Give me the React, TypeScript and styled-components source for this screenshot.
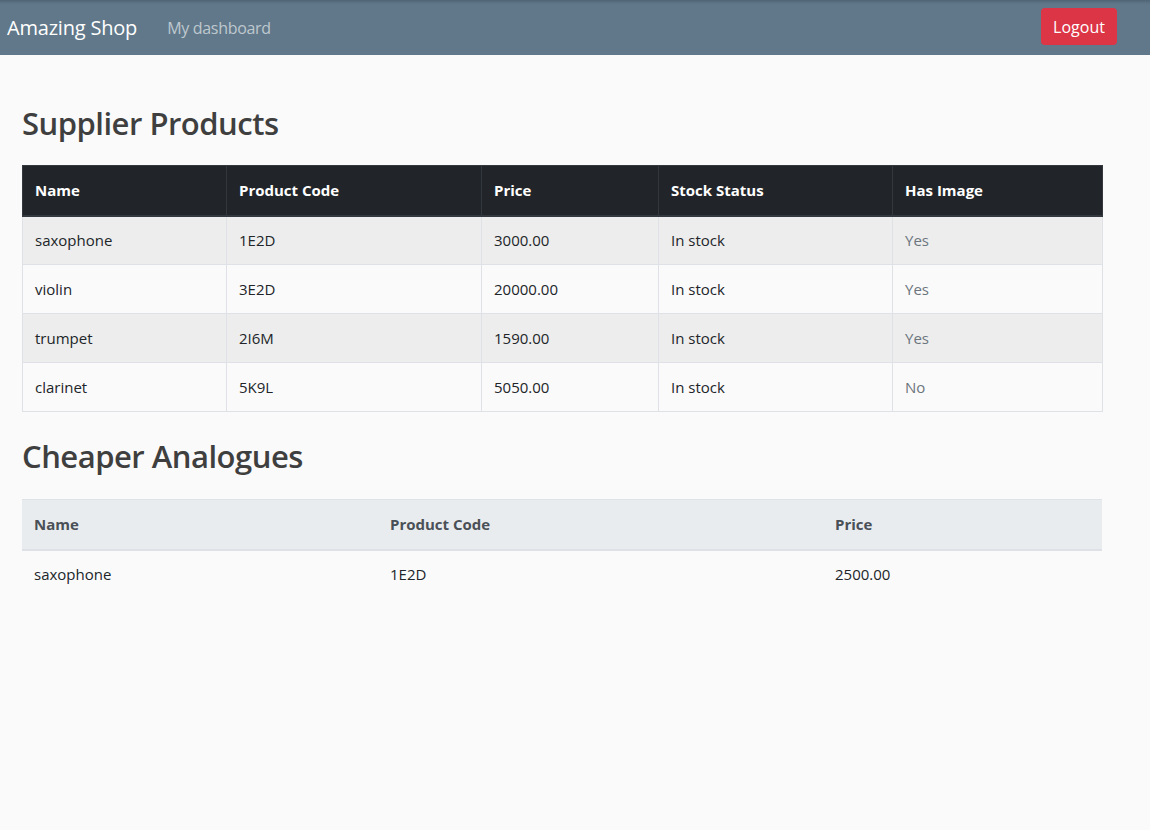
import React from "react";
import styled, { createGlobalStyle } from "styled-components";

const Global = createGlobalStyle`
  html, body { margin: 0; padding: 0; }
  body {
    background: #fafafa;
    font-family: "Open Sans", "Noto Sans", sans-serif;
    font-size: 16px;
    line-height: 1.5;
    color: #212529;
  }
  * { box-sizing: border-box; }
`;

const Navbar = styled.nav`
  height: 55px;
  background: linear-gradient(to bottom, #4f6474 0px, #5d7486 3px, #607889 5px, #607889 100%);
  display: flex;
  align-items: center;
  padding: 0 33px 0 7px;
`;

const Brand = styled.a`
  font-size: 20px;
  color: #fff;
  text-decoration: none;
  margin-right: 30px;
  letter-spacing: -0.2px;
`;

const NavLink = styled.a`
  font-size: 16px;
  color: rgba(255, 255, 255, 0.6);
  text-decoration: none;
  letter-spacing: -0.3px;
`;

const Spacer = styled.div`
  flex: 1;
`;

const LogoutButton = styled.button`
  height: 37px;
  width: 76px;
  background: #dc3545;
  color: #fff;
  border: none;
  border-radius: 4px;
  font-family: inherit;
  font-size: 16px;
  padding: 0;
  margin-top: -2px;
`;

const Main = styled.main`
  padding: 0 48px 0 22px;
`;

const Heading = styled.h2<{ $top: number }>`
  font-size: 31px;
  font-weight: 600;
  line-height: 1.2;
  color: #3f3f3f;
  margin: 0;
  letter-spacing: -0.5px;
  padding: ${(p) => p.$top}px 0 0;
  height: ${(p) => p.$top + 38}px;
`;

const Table = styled.table<{ $mt: number }>`
  width: 1080px;
  border-collapse: collapse;
  table-layout: fixed;
  margin-top: ${(p) => p.$mt}px;
  margin-bottom: 18px;
`;

const DarkTh = styled.th<{ $w: number }>`
  width: ${(p) => p.$w}px;
  background: #212529;
  color: #fff;
  font-weight: 700;
  text-align: left;
  padding: 12px;
  border: 1px solid #32383e;
  border-bottom: 2px solid #32383e;
  font-size: 15px;
  height: 50px;
`;

const Row = styled.tr<{ $striped: boolean }>`
  background: ${(p) => (p.$striped ? "#ededed" : "transparent")};
`;

const Td = styled.td<{ $muted?: boolean }>`
  border: 1px solid #dee2e6;
  padding: 12px;
  font-size: 15px;
  color: ${(p) => (p.$muted ? "#6c757d" : "#212529")};
  height: 49px;
`;

const LightTh = styled.th<{ $w: number }>`
  width: ${(p) => p.$w}px;
  background: #e9ecef;
  color: #495057;
  font-weight: 700;
  text-align: left;
  padding: 12px;
  border-top: 1px solid #dee2e6;
  border-bottom: 2px solid #dee2e6;
  font-size: 15px;
  height: 50px;
`;

const PlainTd = styled.td`
  padding: 12px;
  font-size: 15px;
  color: #212529;
  height: 49px;
`;

const products = [
  ["saxophone", "1E2D", "3000.00", "In stock", "Yes"],
  ["violin", "3E2D", "20000.00", "In stock", "Yes"],
  ["trumpet", "2I6M", "1590.00", "In stock", "Yes"],
  ["clarinet", "5K9L", "5050.00", "In stock", "No"],
];

const analogues = [["saxophone", "1E2D", "2500.00"]];

export default function App() {
  return (
    <>
      <Global />
      <Navbar>
        <Brand href="#">Amazing Shop</Brand>
        <NavLink href="#">My dashboard</NavLink>
        <Spacer />
        <LogoutButton>Logout</LogoutButton>
      </Navbar>
      <Main>
        <Heading $top={50}>Supplier Products</Heading>
        <Table $mt={22}>
          <thead>
            <tr>
              <DarkTh $w={204}>Name</DarkTh>
              <DarkTh $w={255}>Product Code</DarkTh>
              <DarkTh $w={177}>Price</DarkTh>
              <DarkTh $w={234}>Stock Status</DarkTh>
              <DarkTh $w={210}>Has Image</DarkTh>
            </tr>
          </thead>
          <tbody>
            {products.map((r, i) => (
              <Row key={i} $striped={i % 2 === 0}>
                <Td>{r[0]}</Td>
                <Td>{r[1]}</Td>
                <Td>{r[2]}</Td>
                <Td>{r[3]}</Td>
                <Td $muted>{r[4]}</Td>
              </Row>
            ))}
          </tbody>
        </Table>
        <Heading $top={8}>Cheaper Analogues</Heading>
        <Table $mt={23}>
          <thead>
            <tr>
              <LightTh $w={356}>Name</LightTh>
              <LightTh $w={445}>Product Code</LightTh>
              <LightTh $w={279}>Price</LightTh>
            </tr>
          </thead>
          <tbody>
            {analogues.map((r, i) => (
              <tr key={i}>
                <PlainTd>{r[0]}</PlainTd>
                <PlainTd>{r[1]}</PlainTd>
                <PlainTd>{r[2]}</PlainTd>
              </tr>
            ))}
          </tbody>
        </Table>
      </Main>
    </>
  );
}
